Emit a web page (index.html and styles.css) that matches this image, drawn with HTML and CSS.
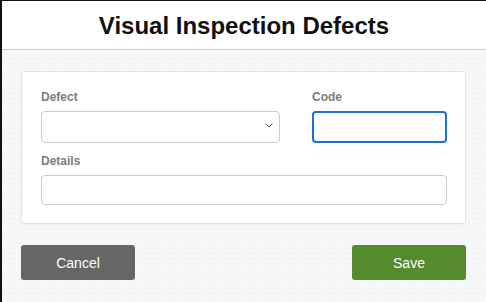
FILE: index.html
```html
<!DOCTYPE html>
<html lang="en">
<head>
    <meta charset="UTF-8">
    <meta name="viewport" content="width=device-width, initial-scale=1.0">
    <title>Visual Inspection Defects</title>
    <link rel="stylesheet" href="styles.css">
</head>
<body>
    <div class="modal">
        <div class="modal-header">
            <h1>Visual Inspection Defects</h1>
        </div>

        <div class="modal-body">
            <div class="card">
                <div class="row">
                    <div class="form-group defect">
                        <label for="defect">Defect</label>
                        <div class="select-wrap">
                            <select id="defect"></select>
                            <svg class="chevron" width="8" height="5" viewBox="0 0 8 5">
                                <path d="M0.5 0.5 L4 4 L7.5 0.5" fill="none" stroke="#555" stroke-width="1"/>
                            </svg>
                        </div>
                    </div>
                    <div class="form-group code">
                        <label for="code">Code</label>
                        <input type="text" id="code" class="focused">
                    </div>
                </div>
                <div class="form-group">
                    <label for="details">Details</label>
                    <input type="text" id="details" class="details">
                </div>
            </div>

            <div class="actions">
                <button class="btn cancel">Cancel</button>
                <button class="btn save">Save</button>
            </div>
        </div>
    </div>
</body>
</html>
```

FILE: styles.css
```css
* {
    box-sizing: border-box;
}
html, body {
    margin: 0;
    height: 100%;
}
body {
    font-family: "Liberation Sans", Arial, sans-serif;
}
.modal {
    height: 100%;
    border-left: 2px solid #111;
    border-top: 1px solid #111;
    background-color: #f6f7f9;
    background-image: radial-gradient(circle, #e8e9ed 0.6px, transparent 1px);
    background-size: 5px 5px;
}
.modal-header {
    height: 49px;
    background: white;
    border-bottom: 1px solid #cfcfcf;
    display: flex;
    align-items: center;
    justify-content: center;
}
h1 {
    margin: 0;
    font-size: 24px;
    font-weight: bold;
    color: #111;
    padding-top: 1px;
}
.modal-body {
    padding: 21px 20px 0 19px;
}
.card {
    background: white;
    border: 1px solid #e2e2e2;
    border-radius: 3px;
    box-shadow: 0 1px 2px rgba(0,0,0,0.04);
    padding: 18px 18px 18px 19px;
}
.row {
    display: flex;
    justify-content: space-between;
    margin-bottom: 11px;
}
.defect {
    width: 239px;
}
.code {
    width: 135px;
}
label {
    display: block;
    font-size: 12px;
    line-height: 14px;
    font-weight: bold;
    color: #7c7c7c;
    margin-bottom: 7px;
}
.select-wrap {
    position: relative;
}
select, input {
    display: block;
    width: 100%;
    height: 32px;
    border: 1px solid #cccccc;
    border-radius: 4px;
    background: white;
    font-family: inherit;
    font-size: 14px;
    appearance: none;
    -webkit-appearance: none;
    outline: none;
}
.chevron {
    position: absolute;
    right: 7px;
    top: 12px;
}
input.focused {
    border: 2px solid #1d6fe0;
}
input.details {
    height: 30px;
}
.actions {
    display: flex;
    justify-content: space-between;
    margin-top: 21px;
}
.btn {
    width: 114px;
    height: 35px;
    border: none;
    border-radius: 3px;
    color: white;
    font-family: inherit;
    font-size: 14px;
    cursor: pointer;
}
.cancel {
    background-color: #666666;
}
.save {
    background-color: #558b2d;
}
```
